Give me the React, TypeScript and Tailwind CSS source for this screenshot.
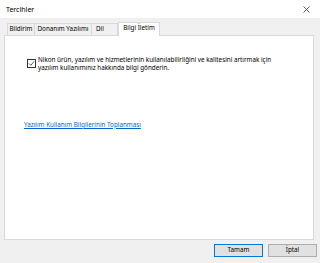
import React from "react";

export default function App() {
  const font = { fontFamily: '"Noto Sans", "Open Sans", sans-serif' };
  return (
    <div className="w-[320px] h-[263px] bg-[#f0f0f0] flex flex-col text-[#000]" style={font}>
      <div className="h-[18px] bg-white flex items-center justify-between pl-[6px] pr-[10px]">
        <span className="text-[7px] leading-none">Tercihler</span>
        <svg width="7" height="7" viewBox="0 0 7 7" className="block">
          <path d="M0.5 0.5 L6.5 6.5 M6.5 0.5 L0.5 6.5" stroke="#333" strokeWidth="0.8" />
        </svg>
      </div>
      <div className="flex items-end pl-[7px] pt-[3px] h-[17px] relative z-10">
        <div className="w-[28px] h-[12px] border border-b-0 border-[#d9d9d9] flex items-center justify-center text-[6.3px] leading-none">Bildirim</div>
        <div className="w-[57px] h-[12px] border border-l-0 border-b-0 border-[#d9d9d9] flex items-center justify-center text-[6.3px] leading-none">Donanım Yazılımı</div>
        <div className="w-[26px] h-[12px] border border-l-0 border-b-0 border-[#d9d9d9] flex items-center pl-[4px] text-[6.3px] leading-none">Dil</div>
        <div className="w-[42px] h-[14px] -mb-[1px] bg-white border border-b-0 border-[#d9d9d9] flex items-start pt-[2px] justify-center text-[6.3px] leading-none">Bilgi İletim</div>
      </div>
      <div className="mx-[4px] w-[310px] h-[205px] bg-white border border-[#d9d9d9] flex flex-col">
        <div className="flex items-start pl-[22px] pt-[20px]">
          <div className="w-[9px] h-[9px] mt-[3px] border border-[#333] flex items-center justify-center shrink-0">
            <svg width="7" height="7" viewBox="0 0 7 7" className="block">
              <path d="M1 3.5 L2.8 5.3 L6 1.5" stroke="#333" strokeWidth="0.8" fill="none" />
            </svg>
          </div>
          <div className="ml-[2px] text-[6.3px] leading-[8px] w-[250px]">
            Nikon ürün, yazılım ve hizmetlerinin kullanılabilirliğini ve kalitesini artırmak için
            <br />
            yazılım kullanımınız hakkında bilgi gönderin.
          </div>
        </div>
        <div className="pl-[19px] mt-[37px]">
          <span className="text-[6.3px] leading-none text-[#0066cc] underline">Yazılım Kullanım Bilgilerinin Toplanması</span>
        </div>
      </div>
      <div className="flex justify-end gap-[5px] pr-[3px] mt-[4px]">
        <button className="w-[49px] h-[13px] bg-[#e1e1e1] border border-[#0078d7] text-[6.3px] leading-none flex items-center justify-center">Tamam</button>
        <button className="w-[49px] h-[13px] bg-[#e1e1e1] border border-[#adadad] text-[6.3px] leading-none flex items-center justify-center">İptal</button>
      </div>
    </div>
  );
}
